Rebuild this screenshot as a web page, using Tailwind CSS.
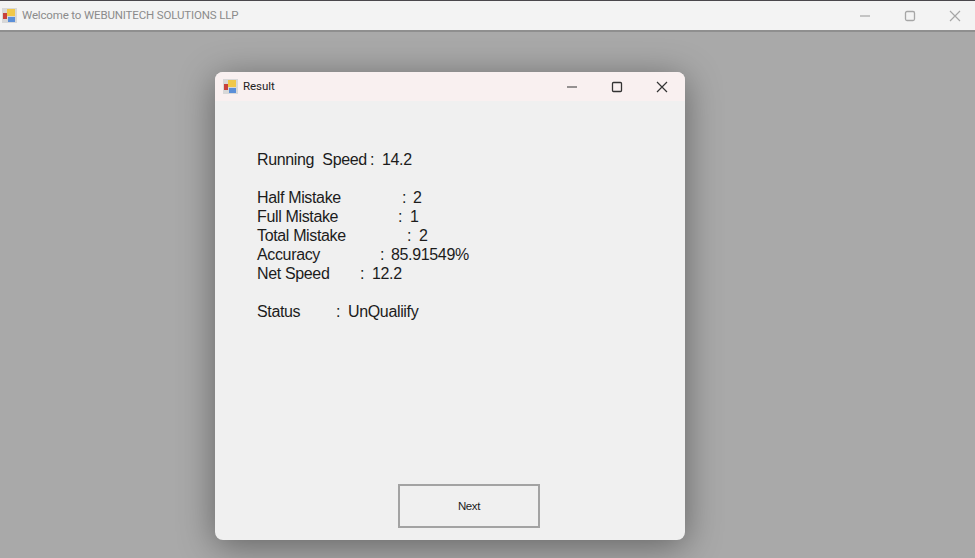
<!DOCTYPE html>
<html lang="en">
  <head>
    <meta charset="UTF-8" />
    <title>Result</title>
    <script src="https://cdn.jsdelivr.net/npm/@tailwindcss/browser@4"></script>
  </head>
  <body class="w-[975px] h-[558px] overflow-hidden bg-[#a9a9a9] font-['Liberation_Sans',Arial,sans-serif]">
    <!-- main window title bar -->
    <header class="h-[32px] bg-[#f3f3f3] border-t border-t-[#4a474c] border-b-2 border-b-[#8f8f8f] flex items-center pl-[2px]">
      <svg class="w-[15px] h-[15px]" viewBox="0 0 15 15">
        <rect x="0" y="0" width="15" height="15" fill="#d8d8d8"/>
        <rect x="1" y="5" width="4" height="6" fill="#c8413c"/>
        <rect x="5" y="1" width="8" height="7" fill="#f0c84a"/>
        <rect x="6" y="9" width="7" height="5" fill="#5b8fd8"/>
      </svg>
      <span class="ml-[5px] pt-[1px] text-[11.5px] tracking-[-0.15px] text-[#8b8b8b] font-['Roboto',sans-serif]">Welcome to WEBUNITECH SOLUTIONS LLP</span>
      <div class="ml-auto flex items-center text-[#a6a6a6]">
        <svg class="w-[44px] h-[14px]" viewBox="0 0 44 14" fill="none" stroke="currentColor" stroke-width="1.2"><path d="M17 7h10"/></svg>
        <svg class="w-[44px] h-[14px] ml-[1px]" viewBox="0 0 44 14" fill="none" stroke="currentColor" stroke-width="1.3"><rect x="17.5" y="2.5" width="9" height="9" rx="1.5"/></svg>
        <svg class="w-[44px] h-[14px] ml-[1px] mr-[-2px]" viewBox="0 0 44 14" fill="none" stroke="currentColor" stroke-width="1.2"><path d="M17 2l10 10M27 2L17 12"/></svg>
      </div>
    </header>

    <!-- result dialog -->
    <main class="ml-[215px] mt-[40px] w-[470px] h-[468px] rounded-[8px] bg-[#f0f0f0] overflow-hidden shadow-[0_6px_36px_rgba(0,0,0,0.42)] flex flex-col">
      <div class="h-[29px] shrink-0 bg-[#f9f0f0] flex items-center pl-[8px]">
        <svg class="w-[15px] h-[15px]" viewBox="0 0 15 15">
          <rect x="0" y="0" width="15" height="15" fill="#d8d8d8"/>
          <rect x="1" y="5" width="4" height="6" fill="#c8413c"/>
          <rect x="5" y="1" width="8" height="7" fill="#f0c84a"/>
          <rect x="6" y="9" width="7" height="5" fill="#5b8fd8"/>
        </svg>
        <span class="ml-[5px] pt-[1px] text-[11.5px] tracking-[-0.05px] text-[#222] font-['Roboto',sans-serif]">Result</span>
        <div class="ml-auto flex items-center text-[#333]">
          <svg class="w-[44px] h-[14px]" viewBox="0 0 44 14" fill="none" stroke="currentColor" stroke-width="1.2"><path d="M17 7h10"/></svg>
          <svg class="w-[44px] h-[14px] ml-[1px]" viewBox="0 0 44 14" fill="none" stroke="currentColor" stroke-width="1.3"><rect x="17.5" y="2.5" width="9" height="9" rx="1"/></svg>
          <svg class="w-[44px] h-[14px] ml-[1px] mr-[1px]" viewBox="0 0 44 14" fill="none" stroke="currentColor" stroke-width="1.2"><path d="M17 2l10 10M27 2L17 12"/></svg>
        </div>
      </div>
      <div class="flex-1 flex flex-col pl-[42px] pt-[49px] text-[16px] leading-[19px] tracking-[-0.35px] whitespace-nowrap text-[#1c1c1c]">
        <div class="flex"><span class="w-[113px]">Running&nbsp; Speed</span><span class="w-[12px]">:</span><span>14.2</span></div>
        <div class="h-[19px]"></div>
        <div class="flex"><span class="w-[145px]">Half Mistake</span><span class="w-[11px]">:</span><span>2</span></div>
        <div class="flex"><span class="w-[141px]">Full Mistake</span><span class="w-[12px]">:</span><span>1</span></div>
        <div class="flex"><span class="w-[150px]">Total Mistake</span><span class="w-[12px]">:</span><span>2</span></div>
        <div class="flex"><span class="w-[123px]">Accuracy</span><span class="w-[11px]">:</span><span>85.91549%</span></div>
        <div class="flex"><span class="w-[103px]">Net Speed</span><span class="w-[12px]">:</span><span>12.2</span></div>
        <div class="h-[19px]"></div>
        <div class="flex"><span class="w-[79px]">Status</span><span class="w-[12px]">:</span><span>UnQualiify</span></div>
        <button class="mt-auto mb-[12px] ml-[141px] w-[142px] h-[44px] border-2 border-[#a3a3a3] text-[11.5px] tracking-[-0.4px] text-[#1c1c1c]">Next</button>
      </div>
    </main>
  </body>
</html>
